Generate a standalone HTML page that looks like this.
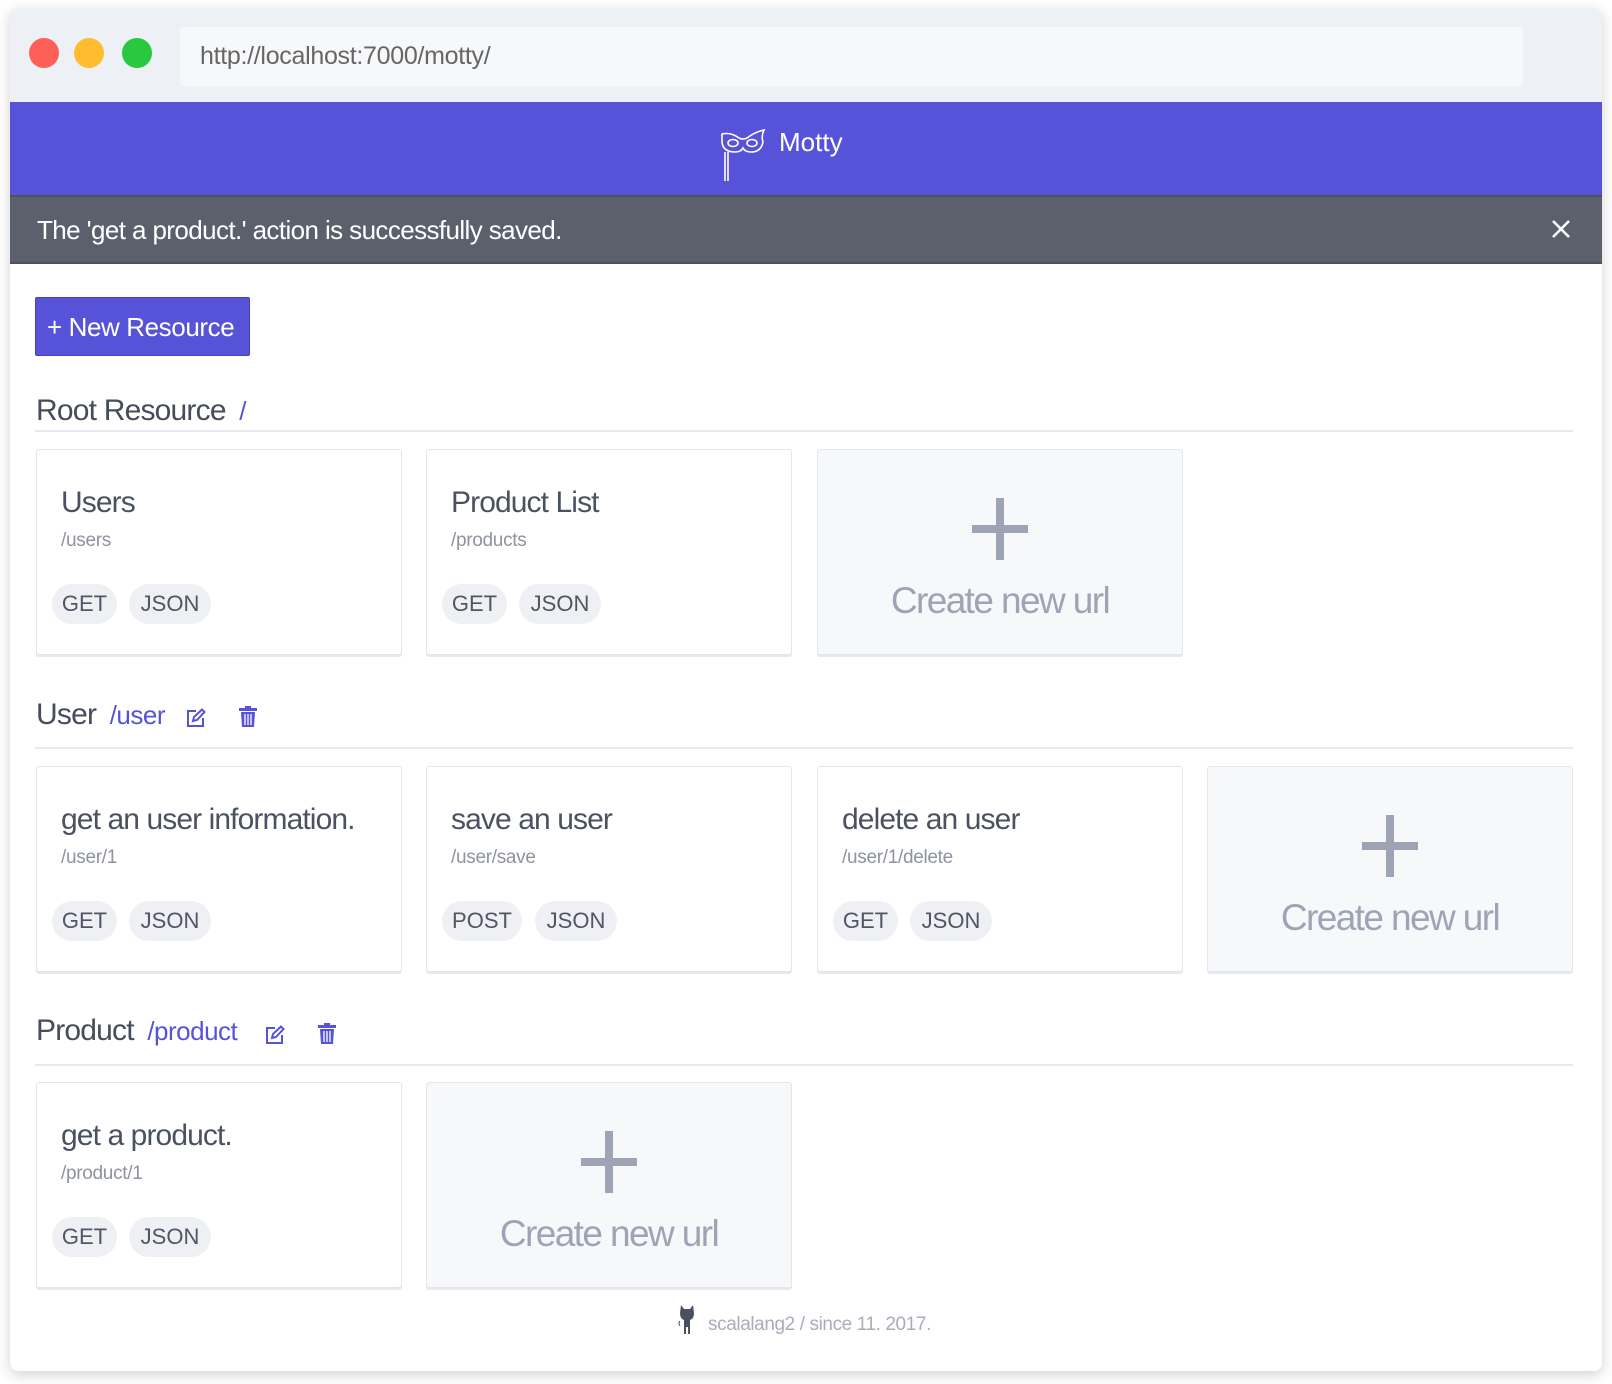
<!DOCTYPE html>
<html><head><meta charset="utf-8"><style>
*{margin:0;padding:0;box-sizing:border-box}
body{width:1612px;height:1384px;background:#fff;font-family:"Liberation Sans",sans-serif;position:relative;overflow:hidden}
.a{position:absolute}
.win{left:10px;top:8px;width:1592px;height:1363px;border-radius:8px;box-shadow:0 4px 14px rgba(0,0,0,.18);background:#fff;overflow:hidden}
.dot{width:30px;height:30px;border-radius:50%;top:30px}
.card{background:#fff;border:1.5px solid #e4e6ec;border-radius:3px;width:366px;height:206px;box-shadow:0 2px 0 #e8e9ef}
.card.new{background:#f7f8fa}
.t{left:24px;top:36px;font-size:30px;color:#4a5262;letter-spacing:-0.9px;white-space:nowrap}
.p{left:24px;top:80px;font-size:19px;color:#8e939e;letter-spacing:-0.3px}
.b{top:134px;height:40px;border-radius:20px;background:#eff0f4;color:#4f5666;font-size:22px;line-height:40px;text-align:center}
.h{font-size:30px;color:#454c5a;letter-spacing:-0.8px;white-space:nowrap}
.hp{font-size:26px;color:#5753d9;letter-spacing:-0.5px}
.line{left:35px;width:1538px;height:2px;background:#e8e9ef}
.plus1{left:154px;top:48px;width:56px;height:8px;background:#9ea4b5;margin-top:27px}
.plus2{left:178px;top:48px;width:8px;height:62px;background:#9ea4b5}
.cn{left:0;width:100%;top:130px;text-align:center;font-size:37px;color:#9ea4b5;letter-spacing:-1.6px}
</style></head><body>
<div class="a win">
 <div class="a" style="left:0;top:0;width:1592px;height:94px;background:#edf0f4"></div>
 <div class="a dot" style="left:19px;background:#fe5f57"></div>
 <div class="a dot" style="left:64px;background:#febc2e"></div>
 <div class="a dot" style="left:112px;background:#28c840"></div>
 <div class="a" style="left:170px;top:19px;width:1343px;height:59px;background:#f7f8fa;border-radius:4px"></div>
 <div class="a" style="left:190px;top:34px;font-size:25px;color:#666;letter-spacing:-0.3px">http://localhost:7000/motty/</div>
 <div class="a" style="left:0;top:94px;width:1592px;height:93px;background:#5753d9"></div>
 <svg class="a" style="left:709px;top:118px" width="48" height="56" viewBox="0 0 48 56" fill="none" stroke="#fff" stroke-width="1.6"><path d="M3 8 Q12 6 20 12 Q24 14 28 12 Q36 6 45 4 Q42 10 44 16 Q42 26 32 26 Q26 26 24 22 Q22 26 16 26 Q4 26 3 16 Z"/><ellipse cx="14" cy="17" rx="5" ry="3.5"/><ellipse cx="33" cy="17" rx="5" ry="3.5"/><path d="M6 26 V55 M9 26 V55"/></svg>
 <div class="a" style="left:769px;top:119px;font-size:26px;color:#fff">Motty</div>
 <div class="a" style="left:0;top:187px;width:1592px;height:69px;background:#5a606c;border-top:2px solid #4c525c;border-bottom:2px solid #4c525c"></div>
 <div class="a" style="left:27px;top:207px;font-size:26px;color:#fff;letter-spacing:-0.6px">The 'get a product.' action is successfully saved.</div>
 <svg class="a" style="left:1542px;top:212px" width="18" height="18" stroke="#fff" stroke-width="2.6"><path d="M1 1L17 17M17 1L1 17"/></svg>

 <div class="a" style="left:25px;top:289px;width:215px;height:59px;background:#5753d9;border:1.5px solid #4440c4;border-radius:2px"></div>
 <div class="a" style="left:37px;top:304px;font-size:26px;color:#fff;letter-spacing:-0.4px">+&nbsp;New Resource</div>

 <div class="a h" style="left:26px;top:386px">Root Resource <span class="hp" style="margin-left:6px">/</span></div>
 <div class="a line" style="left:25px;top:422px"></div>

 <div class="a card" style="left:26px;top:441px"><div class="a t">Users</div><div class="a p">/users</div><div class="a b" style="left:15px;width:65px">GET</div><div class="a b" style="left:92px;width:82px">JSON</div></div>
 <div class="a card" style="left:416px;top:441px"><div class="a t">Product List</div><div class="a p">/products</div><div class="a b" style="left:15px;width:65px">GET</div><div class="a b" style="left:92px;width:82px">JSON</div></div>
 <div class="a card new" style="left:807px;top:441px"><div class="a plus1"></div><div class="a plus2"></div><div class="a cn">Create new url</div></div>

 <div class="a h" style="left:26px;top:690px">User <span class="hp" style="margin-left:6px">/user</span></div>
 <svg class="a" style="left:176px;top:700px" width="20" height="20" fill="none" stroke="#5753d9" stroke-width="2"><path d="M10 3H2V18H17V10"/><path d="M7 13L8 9L16 1.5L18.5 4L11 12Z"/></svg>
 <svg class="a" style="left:229px;top:698px" width="18" height="21" fill="#5753d9"><rect x="0" y="2" width="18" height="3"/><rect x="6" y="0" width="6" height="3"/><path d="M2 6H16L15 21H3Z"/><path d="M6 8V19M9 8V19M12 8V19" stroke="#fff" stroke-width="1.3"/></svg>
 <div class="a line" style="left:25px;top:739px"></div>

 <div class="a card" style="left:26px;top:758px"><div class="a t">get an user information.</div><div class="a p">/user/1</div><div class="a b" style="left:15px;width:65px">GET</div><div class="a b" style="left:92px;width:82px">JSON</div></div>
 <div class="a card" style="left:416px;top:758px"><div class="a t">save an user</div><div class="a p">/user/save</div><div class="a b" style="left:15px;width:80px">POST</div><div class="a b" style="left:108px;width:82px">JSON</div></div>
 <div class="a card" style="left:807px;top:758px"><div class="a t">delete an user</div><div class="a p">/user/1/delete</div><div class="a b" style="left:15px;width:65px">GET</div><div class="a b" style="left:92px;width:82px">JSON</div></div>
 <div class="a card new" style="left:1197px;top:758px"><div class="a plus1"></div><div class="a plus2"></div><div class="a cn">Create new url</div></div>

 <div class="a h" style="left:26px;top:1006px">Product <span class="hp" style="margin-left:6px">/product</span></div>
 <svg class="a" style="left:255px;top:1017px" width="20" height="20" fill="none" stroke="#5753d9" stroke-width="2"><path d="M10 3H2V18H17V10"/><path d="M7 13L8 9L16 1.5L18.5 4L11 12Z"/></svg>
 <svg class="a" style="left:308px;top:1015px" width="18" height="21" fill="#5753d9"><rect x="0" y="2" width="18" height="3"/><rect x="6" y="0" width="6" height="3"/><path d="M2 6H16L15 21H3Z"/><path d="M6 8V19M9 8V19M12 8V19" stroke="#fff" stroke-width="1.3"/></svg>
 <div class="a line" style="left:25px;top:1056px"></div>

 <div class="a card" style="left:26px;top:1074px"><div class="a t">get a product.</div><div class="a p">/product/1</div><div class="a b" style="left:15px;width:65px">GET</div><div class="a b" style="left:92px;width:82px">JSON</div></div>
 <div class="a card new" style="left:416px;top:1074px"><div class="a plus1"></div><div class="a plus2"></div><div class="a cn">Create new url</div></div>

 <svg class="a" style="left:668px;top:1297px" width="18" height="30" fill="#4a5060"><path d="M3 0L6 4H12L15 0L16 8Q16 14 12 15V29H10V22H8V29H6V15Q2 14 2 8Z"/><path d="M2 16Q0 18 2 21" stroke="#4a5060" fill="none"/></svg>
 <div class="a" style="left:698px;top:1306px;font-size:19px;color:#a9adba;letter-spacing:-0.4px">scalalang2 / since 11. 2017.</div>
</div>
</body></html>
